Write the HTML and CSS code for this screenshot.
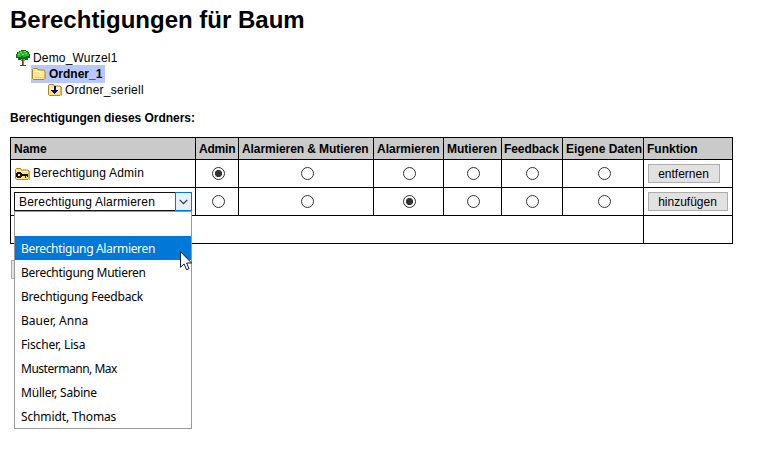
FILE: index.html
```html
<!DOCTYPE html>
<html lang="de">
<head>
<meta charset="utf-8">
<title>Berechtigungen für Baum</title>
<link rel="stylesheet" href="styles.css">
</head>
<body>
<h1>Berechtigungen für Baum</h1>
<div class="tree">
  <div class="node root">
    <svg class="icon" width="16" height="16" viewBox="0 0 16 16"><path fill="#7a2b14" d="M4 8l3 3v4H5v1h6v-1H9v-4l4-3h-2l-2 2V7H7v3L5 8z"/><path fill="#0c6b17" d="M4 1h2V0h5v1h2v1h1v2h1v4h-2v2h-3V9H6v1H3V8H1V4h1V2h2z"/><path fill="#20b82c" d="M5 1h6v1h2v2h1v2h-3v1H8V6H6v1H2V4h1V2h2z"/><path fill="#72e45d" d="M5 2h2v1H5zM9 1h2v1H9zM10 3h2v1h-2zM3 4h2v1H3zM7 4h2v1H7z"/><path fill="#e9582c" d="M8 9h1v6H8z"/></svg>
    <span class="t-root">Demo_Wurzel1</span>
  </div>
  <div class="node folder selected">
    <svg class="icon" width="16" height="16" viewBox="0 0 16 16"><path fill="#ffe896" stroke="#b87f22" d="M1.500 12.500v-9l1-1h4l1 1.500h5.500l1 1v7.500l-1 1H2.500z"/><path fill="none" stroke="#fff9d2" d="M2.500 11.500v-6h10.500"/><path fill="#f7cf67" d="M3 11h10v1H3z"/></svg>
    <span>Ordner_1</span>
  </div>
  <div class="node serial">
    <svg class="icon" width="16" height="16" viewBox="0 0 16 16"><path fill="#bbb" d="M3 14h12V5h-1v9z"/><path fill="#ffe47e" stroke="#b87f22" d="M1.500 12.500v-9l1-1h4l1 1.500h5.500l1 1v7.500l-1 1H2.500z"/><path fill="#fff6c5" d="M3 5h10v4H3z"/><path fill="#07077e" d="M6 4h2v4h2v1H9v1H8v1H7v1H6v-1H5v-1H4V9H3V8h3z" transform="translate(.5)" shape-rendering="crispEdges"/></svg>
    <span class="t-serial">Ordner_seriell</span>
  </div>
</div>
<h2>Berechtigungen dieses Ordners:</h2>
<table>
  <colgroup><col class="c-name"><col class="c-admin"><col class="c-both"><col class="c-alarm"><col class="c-mut"><col class="c-feed"><col class="c-data"><col class="c-func"></colgroup>
  <tr class="head"><th>Name</th><th class="t-admin">Admin</th><th class="t-both">Alarmieren &amp; Mutieren</th><th>Alarmieren</th><th>Mutieren</th><th class="t-feed">Feedback</th><th>Eigene Daten</th><th>Funktion</th></tr>
  <tr>
    <td><div class="perm"><svg class="icon" width="16" height="16" viewBox="0 0 16 16"><path fill="#bbb" d="M3 14h13V5h-1v9z"/><path fill="#ffe47e" stroke="#b87f22" d="M1.500 12.500v-9l1-1h4l1 1.500h6.500l1 1v7.500l-1 1H2.500z"/><path fill="#fff3b0" d="M3 5h11v1H3z"/><path fill="#111" fill-rule="evenodd" d="M3 6h4v1h1v1h6v3h-1v-1h-1v2h-1v-2H8v1H7v1H3v-1H2V7h1zM4 8v2h2V8z"/></svg><span>Berechtigung Admin</span></div></td>
    <td class="mid"><i class="radio on"></i></td><td class="mid"><i class="radio"></i></td><td class="mid shift"><i class="radio"></i></td><td class="mid shift"><i class="radio"></i></td><td class="mid shift"><i class="radio"></i></td><td class="mid"><i class="radio"></i></td>
    <td><button class="remove">entfernen</button></td>
  </tr>
  <tr>
    <td><div class="select"><span class="value">Berechtigung Alarmieren</span><span class="arrow"><svg width="9" height="6" viewBox="0 0 9 6"><path d="M.7.8l3.800 3.800L8.300.8" fill="none" stroke="#333" stroke-width="1.200"/></svg></span>
      <ul class="menu"><li></li><li class="active">Berechtigung Alarmieren</li><li class="tight">Berechtigung Mutieren</li><li class="close">Brechtigung Feedback</li><li>Bauer, Anna</li><li class="fischer">Fischer, Lisa</li><li class="narrow">Mustermann, Max</li><li class="close">Müller, Sabine</li><li class="slim">Schmidt, Thomas</li></ul>
      <svg class="cursor" width="13" height="20" viewBox="0 0 13 20"><path d="M.5.7v15.600l3.600-3.400 2.500 5.800 2.500-1.100-2.500-5.600h5z" fill="#fff" stroke="#111c33"/></svg>
    </div></td>
    <td class="mid"><i class="radio"></i></td><td class="mid"><i class="radio"></i></td><td class="mid shift"><i class="radio on"></i></td><td class="mid shift"><i class="radio"></i></td><td class="mid shift"><i class="radio"></i></td><td class="mid"><i class="radio"></i></td>
    <td><button class="add">hinzufügen</button></td>
  </tr>
  <tr><td colspan="7"></td><td></td></tr>
</table>
<div class="footer-button"></div>
</body>
</html>
```

FILE: styles.css
```css
* { box-sizing: border-box; }
body { margin: 0; padding: 6px 0 0 10px; height: 460px; overflow: hidden; background: #fff; color: #000; font: 12px/16px "Liberation Sans", Arial, sans-serif; }
h1 { margin: 0; font-size: 24px; line-height: 28px; }
.tree { margin-top: 16px; }
.node { display: flex; align-items: center; width: max-content; height: 16px; gap: 2px; }
.icon { display: block; flex: none; }
.root { margin-left: 5px; }
.folder { margin-left: 21px; }
.serial { margin-left: 37px; }
.t-root { letter-spacing: .17px; }
.t-serial { letter-spacing: .25px; }
.selected { height: 18px; margin-top: -1px; margin-bottom: -1px; padding-right: 3px; background: #b8c8ff; font-weight: bold; }
h2 { margin: 12px 0 11px; font-size: 12px; line-height: 16px; letter-spacing: -.04px; }
table { width: 723px; table-layout: fixed; border-collapse: separate; border-spacing: 0; border: solid #000; border-width: 1px 0 0 1px; }
tr { height: 28px; }
.head { height: 22px; background: #cacaca; }
th, td { padding: 0 3px; border: solid #000; border-width: 0 1px 1px 0; text-align: left; vertical-align: middle; white-space: nowrap; }
.t-admin { letter-spacing: -.2px; }
.t-both { letter-spacing: -.07px; }
.t-feed { padding-left: 2px; letter-spacing: -.08px; }
.c-name { width: 185px; }
.c-admin { width: 43px; }
.c-both { width: 135px; }
.c-alarm { width: 70px; }
.c-mut { width: 58px; }
.c-feed { width: 61px; }
.c-data { width: 81px; }
.c-func { width: 89px; }
.perm { display: flex; align-items: center; gap: 3px; }
.perm span { margin-top: -2px; letter-spacing: .2px; }
.mid { padding: 0 0 0 3px; text-align: center; }
.shift { padding-left: 1px; }
.radio { display: block; width: 13px; height: 13px; margin: 0 auto; border: 1px solid #333; border-radius: 50%; background: #fff; }
.on { background: radial-gradient(circle, #333 0 3.300px, #fff 3.900px); }
button { display: block; height: 19px; margin-left: 1px; padding: 0 1px 0 0; border: 1px solid #adadad; background: #e1e1e1; color: #000; font: 12px/16px "Liberation Sans", Arial, sans-serif; }
.remove { width: 72px; }
.add { width: 80px; }
.select { position: relative; display: flex; width: 178px; height: 19px; border: 1px solid #111; }
.value { flex: 1; padding-left: 4px; line-height: 18px; letter-spacing: .2px; }
.arrow { display: flex; align-items: center; justify-content: center; width: 17px; margin: -1px; border: 1px solid #0078d7; background: #e5f1fb; }
.menu { position: absolute; z-index: 1; top: 18px; left: -1px; width: 178px; height: 218px; margin: 0; padding: 0; border: 1px solid #999; background: #fff; list-style: none; font: 12px/25px "Noto Sans", sans-serif; }
.menu li { height: 24px; padding-left: 6px; }
.menu .active { background: #0078d7; color: #fff; letter-spacing: -.34px; }
.menu .tight { letter-spacing: -.29px; }
.menu .close { letter-spacing: -.2px; }
.menu .fischer { letter-spacing: -.15px; }
.menu .narrow { letter-spacing: -.48px; }
.menu .slim { letter-spacing: -.13px; }
.cursor { position: absolute; z-index: 2; top: 58px; left: 165px; }
.footer-button { width: 40px; height: 19px; margin: 16px 0 0 1px; border: 1px solid #adadad; background: #e1e1e1; clip-path: inset(0 30px 0 0); }
```
